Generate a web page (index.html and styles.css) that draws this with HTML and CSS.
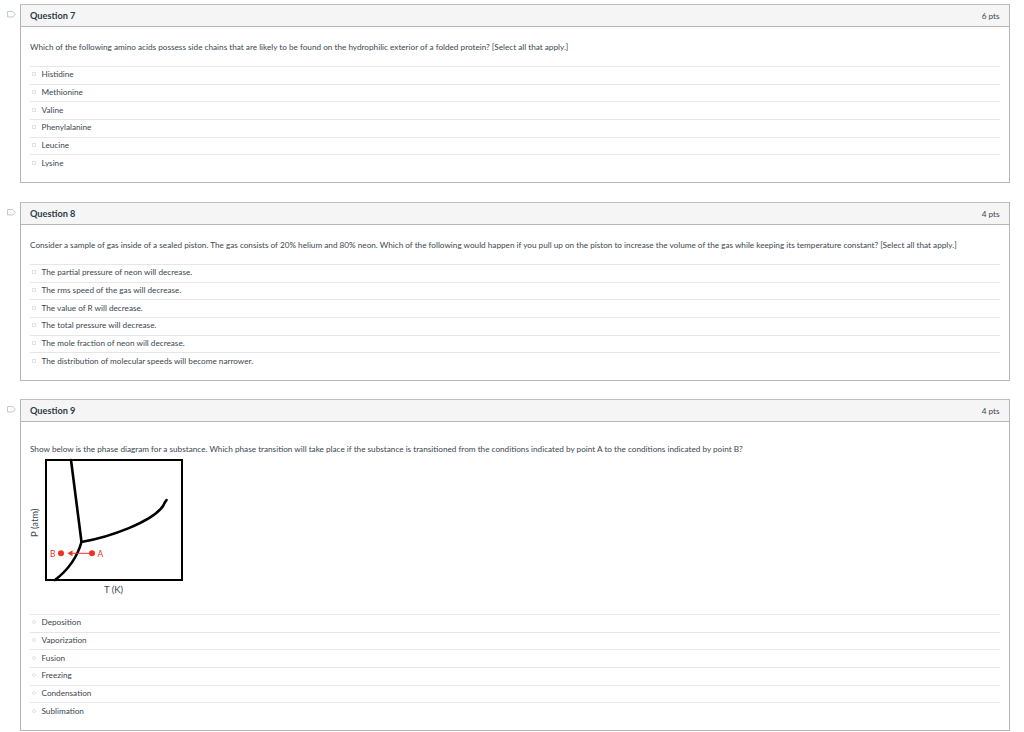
FILE: index.html
```html
<!DOCTYPE html>
<html lang="en">
<head>
<meta charset="utf-8">
<title>Quiz</title>
<link rel="stylesheet" href="styles.css">
</head>
<body>
<main class="quiz">
  <section class="item item-7">
    <svg class="flag" viewBox="0 0 10 7"><path d="M.5.5H6.5L9.300 3.500 6.500 6.500H.5Z"/></svg>
    <div class="card">
      <header class="head"><span class="title">Question 7</span><span class="pts">6 pts</span></header>
      <div class="body">
        <p class="text">Which of the following amino acids possess side chains that are likely to be found on the hydrophilic exterior of a folded protein? [Select all that apply.]</p>
        <ul class="answers">
          <li><span class="box"></span>Histidine</li>
          <li><span class="box"></span>Methionine</li>
          <li><span class="box"></span>Valine</li>
          <li><span class="box"></span>Phenylalanine</li>
          <li><span class="box"></span>Leucine</li>
          <li><span class="box"></span>Lysine</li>
        </ul>
      </div>
    </div>
  </section>
  <section class="item item-8">
    <svg class="flag" viewBox="0 0 10 7"><path d="M.5.5H6.5L9.300 3.500 6.500 6.500H.5Z"/></svg>
    <div class="card">
      <header class="head"><span class="title">Question 8</span><span class="pts">4 pts</span></header>
      <div class="body">
        <p class="text">Consider a sample of gas inside of a sealed piston. The gas consists of 20% helium and 80% neon. Which of the following would happen if you pull up on the piston to increase the volume of the gas while keeping its temperature constant? [Select all that apply.]</p>
        <ul class="answers">
          <li><span class="box"></span>The partial pressure of neon will decrease.</li>
          <li><span class="box"></span>The rms speed of the gas will decrease.</li>
          <li><span class="box"></span>The value of R will decrease.</li>
          <li><span class="box"></span>The total pressure will decrease.</li>
          <li><span class="box"></span>The mole fraction of neon will decrease.</li>
          <li><span class="box"></span>The distribution of molecular speeds will become narrower.</li>
        </ul>
      </div>
    </div>
  </section>
  <section class="item item-9">
    <svg class="flag" viewBox="0 0 10 7"><path d="M.5.5H6.5L9.300 3.500 6.500 6.500H.5Z"/></svg>
    <div class="card">
      <header class="head"><span class="title">Question 9</span><span class="pts">4 pts</span></header>
      <div class="body body-9">
        <p class="text">Show below is the phase diagram for a substance. Which phase transition will take place if the substance is transitioned from the conditions indicated by point A to the conditions indicated by point B?</p>
        <svg class="diagram" viewBox="-4 0 164 141" width="164" height="141">
          <rect x="16" y="2" width="136" height="120" fill="none" stroke="#000" stroke-width="2"/>
          <g fill="none" stroke="#000" stroke-width="2.600" stroke-linecap="round">
            <path d="M41 2 51.500 84"/>
            <path d="M25 122C38 112 47 100 51.500 84C80 79 122 64 133 48 134 46 135 44 136.500 42"/>
          </g>
          <g class="red">
            <circle cx="31" cy="95.300" r="3"/>
            <circle cx="62" cy="95.300" r="3"/>
            <path d="M37.500 95.300 42.500 92.300V98.300Z"/>
            <rect x="41" y="94.800" width="18" height="1"/>
          </g>
          <text class="pt" x="20" y="98.800">B</text>
          <text class="pt" x="67.500" y="98.800">A</text>
          <text class="axis" transform="translate(8 79) rotate(-90)">P (atm)</text>
          <text class="axis" x="74" y="134.500">T (K)</text>
        </svg>
        <ul class="answers">
          <li><span class="radio"></span>Deposition</li>
          <li><span class="radio"></span>Vaporization</li>
          <li><span class="radio"></span>Fusion</li>
          <li><span class="radio"></span>Freezing</li>
          <li><span class="radio"></span>Condensation</li>
          <li><span class="radio"></span>Sublimation</li>
        </ul>
      </div>
    </div>
  </section>
</main>
</body>
</html>
```
FILE: styles.css
```css
* { box-sizing: border-box; }
html, body { margin: 0; padding: 0; background: #fff; }
body {
  font-family: Lato, "Liberation Sans", sans-serif;
  color: #3a474f;
  font-size: 8.4px;
  line-height: 12px;
  overflow: hidden;
  height: 732px;
}
.quiz { display: flex; flex-direction: column; padding: 4px 14px 0 7px; }
.item { display: flex; align-items: flex-start; gap: 4px; }
.item-7 { margin-bottom: 19px; }
.item-8 { margin-bottom: 18px; }
.flag { width: 9px; height: 6.500px; margin-top: 7px; flex: none; }
.flag path { fill: #fff; stroke: #b9c2cc; stroke-width: 1; }
.card { flex: 1; min-width: 0; border: 1px solid #b4b6b8; border-top-color: #bdbfc1; }
.head {
  height: 22px;
  display: flex; justify-content: space-between; align-items: center;
  padding: 0 9.500px 0 9px;
  background: #f5f5f5;
  border-bottom: 1px solid #b4b6b8;
}
.title { font-size: 9.200px; font-weight: 700; color: #2d3b45; }
.pts { font-size: 8.200px; }
.body { padding: 14px 9.500px 10px 9px; height: 155px; }
.body-9 { height: auto; padding-top: 21px; padding-bottom: 10px; }
.text { margin: 0; height: 25px; font-size: 8.200px; white-space: nowrap; }
.answers { list-style: none; margin: 0; padding: 0; }
.answers li {
  height: 17.700px;
  display: flex; align-items: center;
  border-top: 1px solid #e6e6e6;
  font-size: 8.200px;
  padding: 0 0 2px 2px;
}
.box, .radio { width: 4px; height: 4px; margin-right: 5.500px; border: 1px solid #e2e2e2; flex: none; }
.radio { border-radius: 50%; }
.diagram { display: block; margin: -10px 0 15px -4px; }
.red { fill: #ee3124; }
.pt { font: 8.500px Lato, "Liberation Sans", sans-serif; fill: #ee3124; }
.axis { font: 9.500px Lato, "Liberation Sans", sans-serif; fill: #3a474f; }
```
